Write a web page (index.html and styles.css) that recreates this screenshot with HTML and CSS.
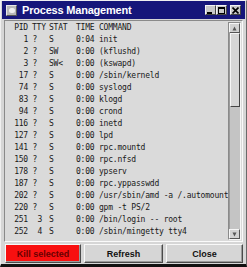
FILE: index.html
```html
<!DOCTYPE html>
<html lang="en">
<head>
<meta charset="UTF-8" />
<title>Process Management</title>
<link rel="stylesheet" href="styles.css">
</head>
<body>

<div class="window">
  <div class="titlebar">
    <span class="app-icon"><span class="app-dot"></span></span>
    <span class="title">Process Management</span>
    <span class="wm-btn wm-min"><span></span></span>
    <span class="wm-btn wm-max"><span></span></span>
    <span class="wm-btn wm-close">
      <svg width="7" height="7" viewBox="0 0 7 7"><path d="M0.5 0.5L6.5 6.5M6.5 0.5L0.5 6.5" stroke="#000" stroke-width="1.6"/></svg>
    </span>
  </div>

  <div class="panel">
    <div class="list">
      <div class="row head"><span class="pid">PID</span><span class="tty">TTY</span><span class="stat">STAT</span><span class="time">TIME</span><span class="cmd">COMMAND</span></div>
      <div class="row"><span class="pid">1</span><span class="tty q">?</span><span class="stat">S</span><span class="time">0:04</span><span class="cmd">init</span></div>
      <div class="row"><span class="pid">2</span><span class="tty q">?</span><span class="stat">SW</span><span class="time">0:00</span><span class="cmd">(kflushd)</span></div>
      <div class="row"><span class="pid">3</span><span class="tty q">?</span><span class="stat">SW&lt;</span><span class="time">0:00</span><span class="cmd">(kswapd)</span></div>
      <div class="row"><span class="pid">17</span><span class="tty q">?</span><span class="stat">S</span><span class="time">0:00</span><span class="cmd">/sbin/kerneld</span></div>
      <div class="row"><span class="pid">74</span><span class="tty q">?</span><span class="stat">S</span><span class="time">0:00</span><span class="cmd">syslogd</span></div>
      <div class="row"><span class="pid">83</span><span class="tty q">?</span><span class="stat">S</span><span class="time">0:00</span><span class="cmd">klogd</span></div>
      <div class="row"><span class="pid">94</span><span class="tty q">?</span><span class="stat">S</span><span class="time">0:00</span><span class="cmd">crond</span></div>
      <div class="row"><span class="pid">116</span><span class="tty q">?</span><span class="stat">S</span><span class="time">0:00</span><span class="cmd">inetd</span></div>
      <div class="row"><span class="pid">127</span><span class="tty q">?</span><span class="stat">S</span><span class="time">0:00</span><span class="cmd">lpd</span></div>
      <div class="row"><span class="pid">141</span><span class="tty q">?</span><span class="stat">S</span><span class="time">0:00</span><span class="cmd">rpc.mountd</span></div>
      <div class="row"><span class="pid">150</span><span class="tty q">?</span><span class="stat">S</span><span class="time">0:00</span><span class="cmd">rpc.nfsd</span></div>
      <div class="row"><span class="pid">178</span><span class="tty q">?</span><span class="stat">S</span><span class="time">0:00</span><span class="cmd">ypserv</span></div>
      <div class="row"><span class="pid">187</span><span class="tty q">?</span><span class="stat">S</span><span class="time">0:00</span><span class="cmd">rpc.yppasswdd</span></div>
      <div class="row"><span class="pid">202</span><span class="tty q">?</span><span class="stat">S</span><span class="time">0:00</span><span class="cmd">/usr/sbin/amd -a /.automount</span></div>
      <div class="row"><span class="pid">220</span><span class="tty q">?</span><span class="stat">S</span><span class="time">0:00</span><span class="cmd">gpm -t PS/2</span></div>
      <div class="row"><span class="pid">251</span><span class="tty">3</span><span class="stat">S</span><span class="time">0:00</span><span class="cmd">/bin/login -- root</span></div>
      <div class="row"><span class="pid">252</span><span class="tty">4</span><span class="stat">S</span><span class="time">0:00</span><span class="cmd">/sbin/mingetty tty4</span></div>
    </div>

    <div class="scrollbar">
      <div class="arrow"><svg width="5" height="5" viewBox="0 0 5 5"><path d="M2.5 0.5L4.5 4.5H0.5Z" fill="#555"/></svg></div>
      <div class="trough">
        <div class="thumb"></div>
      </div>
      <div class="arrow"><svg width="5" height="5" viewBox="0 0 5 5"><path d="M2.5 4.5L4.5 0.5H0.5Z" fill="#555"/></svg></div>
    </div>
  </div>

  <div class="buttons">
    <button class="btn kill">Kill selected</button>
    <button class="btn">Refresh</button>
    <button class="btn">Close</button>
  </div>
</div>

</body>
</html>
```

FILE: styles.css
```css
body {
  margin: 0;
  background: #d6d6d6;
}

.window {
  width: 247px;
  height: 267px;
  box-sizing: border-box;
  background: #d6d6d6;
  border-left: 1px solid #f0f0f0;
  border-top: 1px solid #f0f0f0;
  border-right: 1px solid #6a6a6a;
  border-bottom: 3px solid #111;
  padding: 0 1px;
  display: flex;
  flex-direction: column;
}

/* title bar */

.titlebar {
  height: 18px;
  flex: none;
  background: #16167a;
  display: flex;
  align-items: center;
  padding: 0 4px 0 4px;
}

.app-icon {
  width: 9px;
  height: 9px;
  background: #b8b8b8;
  border: 1px solid #e8e8e8;
  border-right-color: #555;
  border-bottom-color: #555;
  display: flex;
  align-items: center;
  justify-content: center;
  margin-right: 5px;
}

.app-dot {
  width: 6px;
  height: 5px;
  border-radius: 3px;
  background: #eee;
}

.title {
  flex: 1;
  color: #fff;
  font-family: "Liberation Sans", Arial, sans-serif;
  font-weight: bold;
  font-size: 11px;
  letter-spacing: -0.2px;
}

.wm-btn {
  width: 9px;
  height: 8px;
  background: #c8c8c8;
  border: 1px solid #f4f4f4;
  border-right-color: #444;
  border-bottom-color: #444;
  display: flex;
  align-items: center;
  justify-content: center;
}

.wm-min span {
  width: 5px;
  height: 2px;
  background: #000;
  margin-top: 5px;
  margin-right: 2px;
}

.wm-max span {
  width: 5px;
  height: 4px;
  border: 1px solid #000;
  border-top-width: 2px;
}

.wm-close {
  margin-left: 3px;
}

/* process list */

.panel {
  margin: 1px 2px 0 2px;
  height: 220px;
  flex: none;
  display: flex;
  background: #dadada;
  border: 1px solid #8a8a8a;
  border-right-color: #fafafa;
  border-bottom-color: #fafafa;
}

.list {
  flex: 1;
  padding-top: 1px;
  font-family: "DejaVu Sans Mono", monospace;
  font-size: 8px;
  letter-spacing: -0.2px;
  color: #181818;
  overflow: hidden;
}

.row {
  display: grid;
  grid-template-columns: 23px 17px 31px 23px 1fr;
  height: 12px;
  line-height: 12px;
}

.row span {
  white-space: pre;
}

.pid {
  text-align: right;
}

.tty {
  text-align: right;
  padding-right: 3px;
}

.tty.q {
  padding-right: 8px;
}

.stat {
  padding-left: 4px;
}

.head .tty {
  text-align: left;
  padding-left: 4px;
  padding-right: 0;
}

.scrollbar {
  width: 11px;
  margin: 1px 1px 1px 0;
  display: flex;
  flex-direction: column;
  background: #c4c4c4;
  border: 1px solid #8a8a8a;
  border-right-color: #f6f6f6;
  border-bottom-color: #f6f6f6;
}

.arrow {
  height: 8px;
  background: #d2d2d2;
  border: 1px solid #f6f6f6;
  border-right-color: #555;
  border-bottom-color: #555;
  display: flex;
  align-items: center;
  justify-content: center;
}

.trough {
  flex: 1;
  border-left: 1px solid #9a9a9a;
}

.thumb {
  height: 72px;
  background: #d6d6d6;
  border: 1px solid #f6f6f6;
  border-right-color: #444;
  border-bottom-color: #444;
}

/* buttons */

.buttons {
  display: grid;
  grid-template-columns: 76px 79px 77px;
  gap: 3px;
  margin: 2px 2px 0 3px;
}

.btn {
  height: 19px;
  padding: 0;
  font-family: "Liberation Sans", Arial, sans-serif;
  font-weight: bold;
  font-size: 9px;
  color: #111;
  background: #d6d6d6;
  border: 1px solid #f8f8f8;
  border-right-color: #4a4a4a;
  border-bottom-color: #4a4a4a;
  box-shadow: inset -1px -1px 0 #9a9a9a;
}

.btn.kill {
  background: #f81010;
  color: #6a0000;
}
```
